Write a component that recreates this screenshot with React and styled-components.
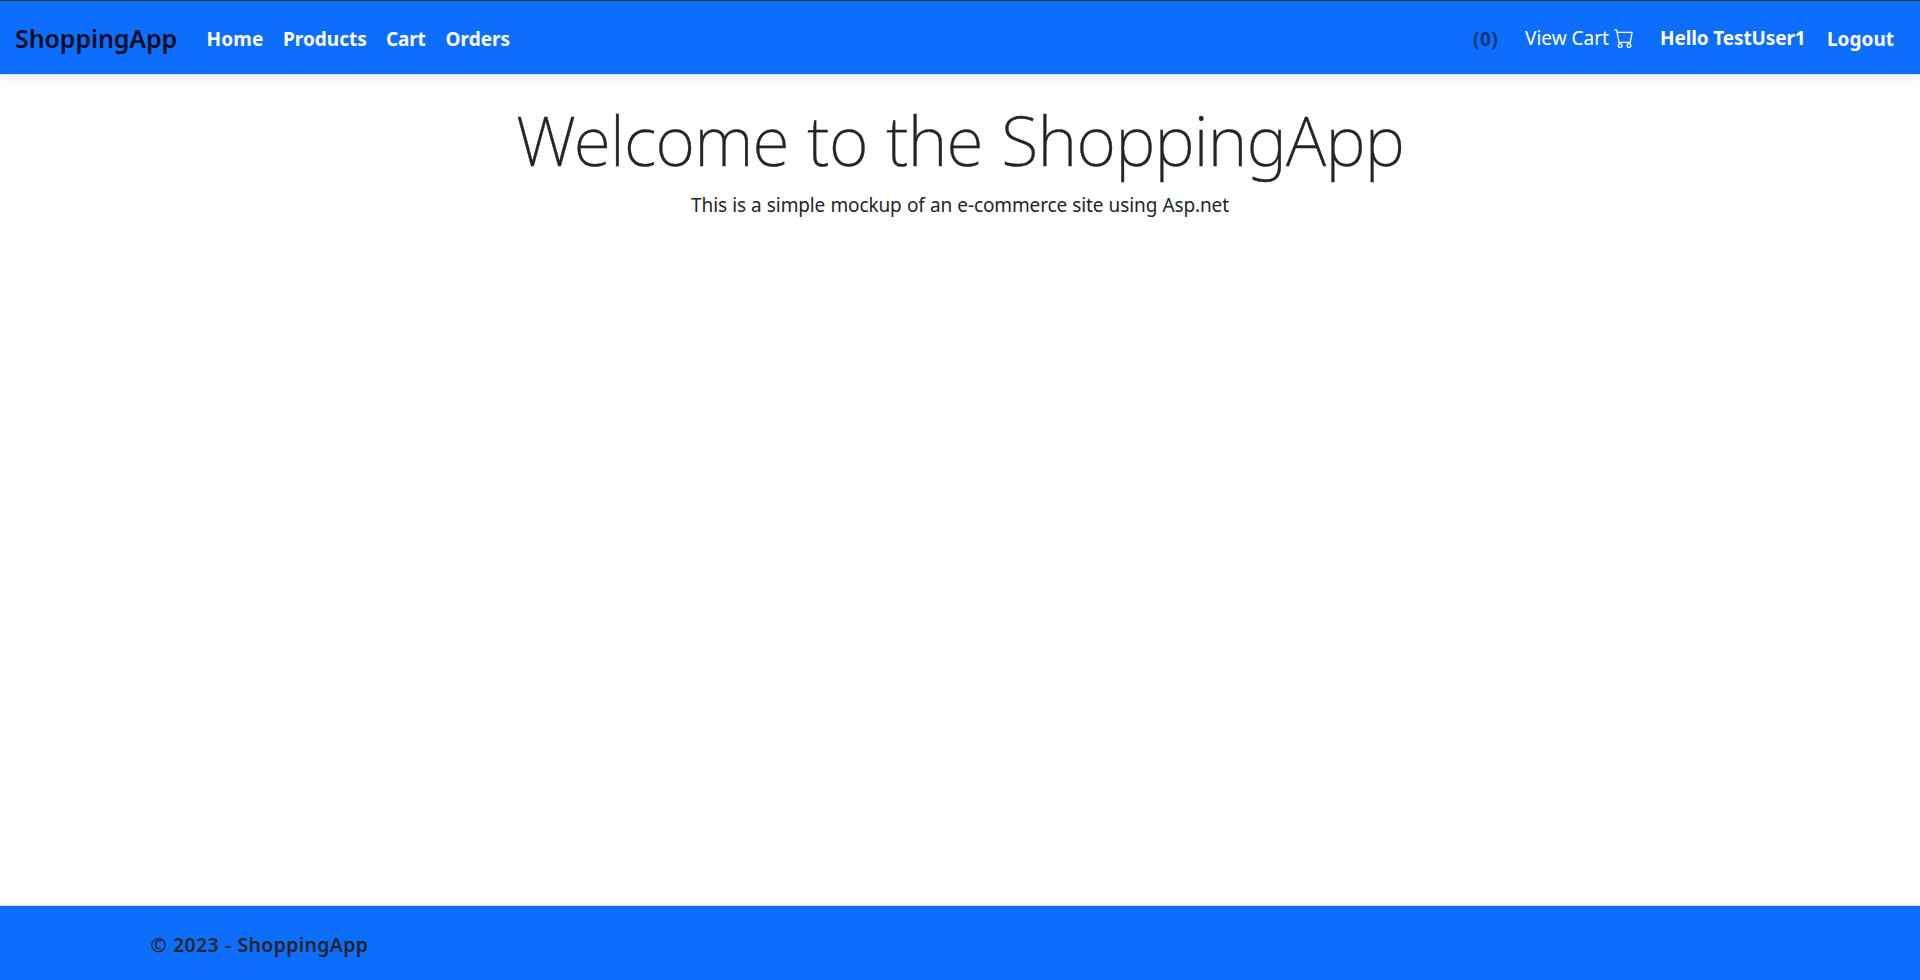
import React from 'react';
import styled, { createGlobalStyle } from 'styled-components';

const GlobalStyle = createGlobalStyle`
  * { box-sizing: border-box; }
  body {
    margin: 0;
    background: #fff;
    color: #212529;
    font-family: "Noto Sans", "Open Sans", sans-serif;
    font-size: 19px;
    line-height: 30px;
  }
`;

const Page = styled.div`
  display: flex;
  flex-direction: column;
  height: 980px;
`;

const Header = styled.header`
  display: flex;
  align-items: center;
  height: 75px;
  padding: 2px 10px 0 15px;
  background: #0d6efd;
  border-top: 1px solid #373737;
  border-bottom: 1px solid #dee2e6;
  box-shadow: 0 5px 15px rgba(0, 0, 0, 0.05);
`;

const Brand = styled.a`
  width: 191.5px;
  padding-bottom: 2px;
  color: rgba(0, 0, 0, 0.9);
  font-size: 25px;
  font-weight: 600;
  letter-spacing: -0.1px;
  white-space: nowrap;
`;

const Nav = styled.nav`
  display: flex;
  align-items: center;
  flex: 1;
`;

const NavLink = styled.a`
  width: ${(p) => p.$width}px;
  color: #fff;
  font-weight: 700;
  letter-spacing: ${(p) => p.$tracking || 0}px;
  white-space: nowrap;
`;

const Account = styled.div`
  display: flex;
  align-items: center;
`;

const Count = styled.span`
  width: 52px;
  color: rgba(0, 0, 0, 0.55);
  font-weight: 700;
  letter-spacing: 0.5px;
`;

const CartLink = styled.a`
  display: flex;
  align-items: center;
  gap: 5px;
  width: 135px;
  padding-bottom: 2px;
  color: #fff;
  white-space: nowrap;
`;

const CartIcon = styled.svg`
  width: 20px;
  height: 20px;
  fill: currentColor;
`;

const Greeting = styled.span`
  width: 167px;
  padding-bottom: 2px;
  color: #fff;
  font-weight: 700;
  letter-spacing: -0.12px;
  white-space: nowrap;
`;

const Main = styled.main`
  flex: 1;
  padding-top: 23px;
  text-align: center;
`;

const Title = styled.h1`
  margin: 0 0 8px;
  font-size: 68px;
  font-weight: 200;
  line-height: 84px;
  letter-spacing: -0.76px;
  word-spacing: 1.6px;
  -webkit-text-stroke: 0.4px currentColor;
`;

const Lead = styled.p`
  margin: 0;
  letter-spacing: -0.12px;
  word-spacing: 0.4px;
`;

const Footer = styled.footer`
  display: flex;
  align-items: center;
  height: 75px;
  padding: 3px 150.5px 0;
  background: #0d6efd;
  border-top: 1px solid #dee2e6;
  font-size: 19.5px;
  font-weight: 600;
  letter-spacing: 0.3px;
  word-spacing: 0.7px;
`;

const links = [
  { label: 'Home', width: 76.5, tracking: 0.2 },
  { label: 'Products', width: 103, tracking: 0 },
  { label: 'Cart', width: 59.5, tracking: -0.2 },
  { label: 'Orders', width: 66, tracking: 0 },
];

export default function App() {
  return (
    <Page>
      <GlobalStyle />
      <Header>
        <Brand>ShoppingApp</Brand>
        <Nav>
          {links.map((l) => (
            <NavLink key={l.label} $width={l.width} $tracking={l.tracking}>{l.label}</NavLink>
          ))}
        </Nav>
        <Account>
          <Count>(0)</Count>
          <CartLink>
            View Cart
            <CartIcon viewBox="0 0 16 16">
              <path d="M0 1.5A.5.5 0 0 1 .5 1H2a.5.5 0 0 1 .485.379L2.89 3H14.5a.5.5 0 0 1 .491.592l-1.5 8A.5.5 0 0 1 13 12H4a.5.5 0 0 1-.491-.408L2.01 3.607 1.61 2H.5a.5.5 0 0 1-.5-.5zM3.102 4l1.313 7h8.17l1.313-7H3.102zM5 12a2 2 0 1 0 0 4 2 2 0 0 0 0-4zm7 0a2 2 0 1 0 0 4 2 2 0 0 0 0-4zm-7 1a1 1 0 1 1 0 2 1 1 0 0 1 0-2zm7 0a1 1 0 1 1 0 2 1 1 0 0 1 0-2z" />
            </CartIcon>
          </CartLink>
          <Greeting>Hello TestUser1</Greeting>
          <NavLink $width={83}>Logout</NavLink>
        </Account>
      </Header>
      <Main>
        <Title>Welcome to the ShoppingApp</Title>
        <Lead>This is a simple mockup of an e-commerce site using Asp.net</Lead>
      </Main>
      <Footer>© 2023 - ShoppingApp</Footer>
    </Page>
  );
}
